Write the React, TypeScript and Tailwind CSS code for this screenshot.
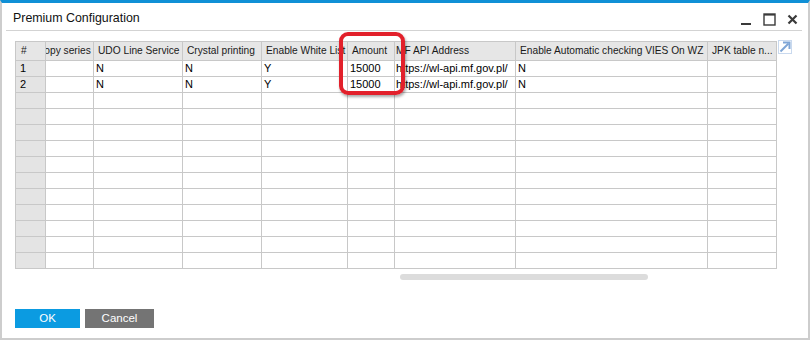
import React from "react";

const cols = [
  { w: 30, head: "#" },
  { w: 48, head: "Copy series", shift: true },
  { w: 89, head: "UDO Line Service" },
  { w: 79, head: "Crystal printing" },
  { w: 86, head: "Enable White List" },
  { w: 47, head: "Amount" },
  { w: 121, head: "MF API Address", tight: true },
  { w: 192, head: "Enable Automatic checking VIES On WZ" },
  { w: 69, head: "JPK table n..." },
];

const data: string[][] = [
  ["1", "", "N", "N", "Y", "15000", "https://wl-api.mf.gov.pl/", "N", ""],
  ["2", "", "N", "N", "Y", "15000", "https://wl-api.mf.gov.pl/", "N", ""],
];

const ROWS = 13;

const WindowControls = () => (
  <div className="flex items-center gap-[11px] pr-[10px] pt-[5px]">
    <svg width="12" height="14" viewBox="0 0 12 14">
      <rect x="1" y="11" width="10" height="2" fill="#3a3a3a" />
    </svg>
    <svg width="13" height="13" viewBox="0 0 13 13">
      <rect x="1" y="1" width="11" height="11" fill="none" stroke="#3a3a3a" strokeWidth="1.4" />
      <rect x="1" y="1" width="11" height="1.6" fill="#3a3a3a" />
    </svg>
    <svg width="11" height="11" viewBox="0 0 11 11">
      <path d="M1.5 1.5 L9.5 9.5 M9.5 1.5 L1.5 9.5" stroke="#3a3a3a" strokeWidth="2.2" />
    </svg>
  </div>
);

const ExpandIcon = () => (
  <svg width="14" height="14" viewBox="0 0 14 14" className="mt-[-1px] ml-[1px]">
    <rect x="0.5" y="0.5" width="13" height="13" fill="none" stroke="#c9d9ee" />
    <path d="M2.5 11.5 L10.5 3.5" stroke="#7ea5d6" strokeWidth="2" />
    <path d="M5 2.5 H11.5 V9" fill="none" stroke="#7ea5d6" strokeWidth="2" />
  </svg>
);

export default function App() {
  const font = { fontFamily: '"Liberation Sans", Arial, sans-serif' };

  return (
    <div
      className="relative w-[810px] h-[340px] bg-white border-t-[3px] border-t-[#1090d6] border-x-2 border-b-2 border-x-[#cdcdcd] border-b-[#cdcdcd] flex flex-col text-black"
      style={font}
    >
      {/* title bar */}
      <div className="flex justify-between h-[27px]">
        <div className="pl-[11px] pt-[6px] text-[12.4px] text-[#111]">Premium Configuration</div>
        <WindowControls />
      </div>
      <div className="mx-[4px] mr-[6px] h-px bg-[#d3d3d3]" />

      {/* grid */}
      <div className="flex mt-[10px] ml-[13px]">
        <div className="border-l border-t border-[#c8c8c8]">
          {/* header */}
          <div className="flex h-[19px] bg-[#e6e6e6] text-[10.2px] text-[#1a1a1a]">
            {cols.map((c, i) => (
              <div
                key={i}
                style={{ width: c.w }}
                className="border-r border-b border-[#c8c8c8] overflow-hidden whitespace-nowrap flex items-center"
              >
                <span
                  className={
                    c.shift ? "ml-[-9px]" : i === 0 ? "pl-[5px]" : c.tight ? "pl-[1px]" : "pl-[4px]"
                  }
                >
                  {c.head}
                </span>
              </div>
            ))}
          </div>
          {/* rows */}
          {Array.from({ length: ROWS }).map((_, r) => (
            <div key={r} className="flex h-[16px] text-[11px]">
              {cols.map((c, i) => (
                <div
                  key={i}
                  style={{ width: c.w }}
                  className={`border-r border-b border-[#c8c8c8] overflow-hidden whitespace-nowrap flex items-center ${
                    i === 0 ? "bg-[#e4e4e4] pl-[4px]" : c.tight ? "pl-[1px]" : "pl-[2px]"
                  }`}
                >
                  {data[r]?.[i] ?? ""}
                </div>
              ))}
            </div>
          ))}
        </div>
        <ExpandIcon />
      </div>

      {/* horizontal scrollbar */}
      <div className="ml-[398px] mt-[5px] w-[248px] h-[6px] rounded-full bg-[#dcdcdc]" />

      {/* buttons */}
      <div className="flex gap-[5px] ml-[13px] mt-[29px] text-[11.5px] text-white">
        <button className="w-[65px] h-[19px] bg-[#0b9be1]">OK</button>
        <button className="w-[69px] h-[19px] bg-[#747474]">Cancel</button>
      </div>

      {/* red highlight over the Amount column */}
      <div className="absolute left-[337px] top-[29px] w-[66px] h-[63px] rounded-[9px] border-[4px] border-[#e2202b] shadow-[1px_2px_3px_rgba(0,0,0,0.35)]" />
    </div>
  );
}
